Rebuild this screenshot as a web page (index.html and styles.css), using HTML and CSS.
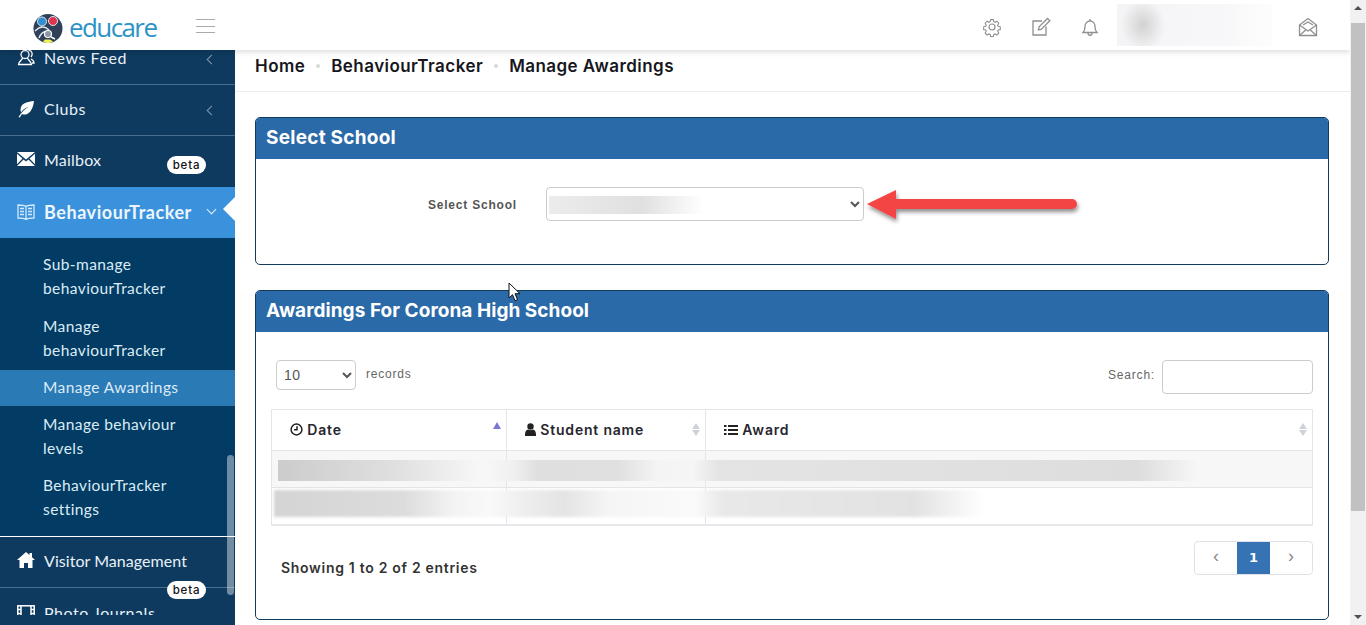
FILE: index.html
```html
<!DOCTYPE html>
<html lang="en">
<head>
<meta charset="utf-8">
<title>Manage Awardings</title>
<link rel="stylesheet" href="styles.css">
</head>
<body>
<div class="app">
  <div class="page">
    <header class="topbar">
      <div class="brand">
        <svg class="logo" width="30" height="30" viewBox="0 0 30 30">
          <circle cx="15" cy="14.500" r="14.500" fill="#2f4058"/>
          <circle cx="9" cy="7.500" r="4.500" fill="#2f8fd0" stroke="#dfe6ee" stroke-width="1"/>
          <circle cx="20" cy="7" r="4.500" fill="#e0344c" stroke="#dfe6ee" stroke-width="1"/>
          <path d="M2 17c5-5 10-5 14-1M6 24c2-5 6-8 12-6" fill="none" stroke="#dfe6ee" stroke-width="1.500"/>
          <circle cx="15" cy="20" r="3.500" fill="#8a96a3" stroke="#fff" stroke-width="1.200"/>
          <path d="M18 23l4 2" stroke="#fff" stroke-width="1.500"/>
          <path d="M10 27.500c3 2 7 2 10 0l-3-2h-5z" fill="#eef05a"/>
        </svg>
        <span class="brand-name">educare</span>
      </div>
      <div class="burger"><i></i><i></i><i></i></div>
      <div class="top-icons">
        <svg class="top-icon" width="20" height="20" viewBox="0 0 20 20" fill="none" stroke="#8f8f8f" stroke-width="1.200"><circle cx="10" cy="10" r="3"/><path d="M8.500 1.800h3l.5 2.300 1.500.7 2-1.200 2 2.200-1.200 2 .6 1.400 2.300.6v3l-2.300.5-.6 1.500 1.200 2-2.100 2.100-2-1.200-1.400.6-.5 2.200h-3l-.5-2.200-1.500-.6-2 1.200-2.100-2.100 1.200-2-.6-1.500-2.300-.5v-3l2.300-.6.6-1.400-1.200-2 2.100-2.200 2 1.200 1.400-.7z" transform="translate(1 1) scale(.9)"/></svg>
        <svg class="top-icon" width="20" height="20" viewBox="0 0 20 20" fill="none" stroke="#8f8f8f" stroke-width="1.300"><path d="M15 9.500V18H2V4h9"/><path d="M7.500 12.800l.6-3L16.500 1.500l2.300 2.300-8.300 8.400z"/></svg>
        <svg class="top-icon" width="20" height="20" viewBox="0 0 20 20" fill="none" stroke="#8f8f8f" stroke-width="1.300"><path d="M3 15.500c1.500-1.500 2-3 2-6 0-3 2-5.500 5-5.500s5 2.500 5 5.500c0 3 .5 4.500 2 6z"/><path d="M10 2v2M8 16c0 3 4 3 4 0"/></svg>
      </div>
      <div class="user-blur"></div>
      <svg class="mail-icon" width="20" height="20" viewBox="0 0 20 20" fill="none" stroke="#8f8f8f" stroke-width="1.300"><path d="M1.500 8L10 1.500 18.500 8v10.500h-17z"/><path d="M1.500 8l8.500 6 8.500-6M1.500 18.500L8 12.800M18.500 18.500L12 12.800"/><path d="M5 8l5-3 5 3"/></svg>
    </header>
    <div class="body">
      <nav class="sidebar">
        <div class="menu-clip">
        <ul class="menu">
          <li class="menu-item">
            <svg class="mi" width="18" height="18" viewBox="0 0 18 18" fill="none" stroke="#fff" stroke-width="1.300"><circle cx="8" cy="5.500" r="4"/><path d="M5.500 9c0 2-4 3.500-4 6.500h13c0-3-4-4.500-4-6.500"/><path d="M11.500 1.500c3-.5 5 3.500 2.500 6.500M14 10c2 1 3 2.500 3 4h-2"/></svg>
            <span>News Feed</span><b class="chev"></b>
          </li>
          <li class="menu-item">
            <svg class="mi" width="18" height="18" viewBox="0 0 18 18" fill="#fff"><path d="M17 1C11 2 4 2.500 3.500 9.500c0 1 .2 2 .7 2.800C6 9.500 9 7.500 12 6.500 8.500 8.500 5 11.500 1.500 17l1.200.5c.8-1.300 1.500-2.500 2.300-3.500C9.500 16 15.500 13 17 1z"/></svg>
            <span>Clubs</span><b class="chev"></b>
          </li>
          <li class="menu-item menu-mail">
            <svg class="mi" width="18" height="14" viewBox="0 0 18 14" fill="#fff"><path d="M0 0h18L9 7.500zM0 1.800V12.300L5.500 6.400zM18 1.800V12.300L12.500 6.400zM0 14l6.500-6.500L9 9.500l2.500-2L18 14z"/></svg>
            <span>Mailbox</span><em class="beta">beta</em>
          </li>
          <li class="menu-item active">
            <svg class="mi" width="18" height="16" viewBox="0 0 18 16" fill="none" stroke="#d5e9fa" stroke-width="1.300"><path d="M9 2.500C7 1 4 1 1 1v13c3 0 6 0 8 1.500 2-1.500 5-1.500 8-1.500V1c-3 0-6 0-8 1.500zM9 2.500v13M3 4.500h4M3 7.500h4M3 10.500h4M11 4.500h4M11 7.500h4M11 10.500h4"/></svg>
            <span>BehaviourTracker</span><b class="chev down"></b>
          </li>
          <li class="submenu">
            <a class="sub">Sub-manage behaviourTracker</a>
            <a class="sub">Manage behaviourTracker</a>
            <a class="sub current">Manage Awardings</a>
            <a class="sub">Manage behaviour levels</a>
            <a class="sub">BehaviourTracker settings</a>
          </li>
          <li class="menu-item visitor">
            <svg class="mi" width="18" height="16" viewBox="0 0 18 16" fill="#fff"><path d="M9 0L0 8h2.500v8H7v-5h4v5h4.500V8H18l-3-2.700V1h-2.500v2z"/></svg>
            <span>Visitor Management</span>
          </li>
          <li class="menu-item photo">
            <svg class="mi" width="18" height="14" viewBox="0 0 18 14" fill="none" stroke="#fff" stroke-width="1.500"><rect x=".8" y=".8" width="16.400" height="12.400"/><path d="M4 1v12M14 1v12M1 4.500h3M1 8.500h3M14 4.500h3M14 8.500h3"/></svg>
            <span>Photo Journals</span><em class="beta">beta</em>
          </li>
        </ul>
        </div>
        <div class="side-thumb"></div>
      </nav>
      <main class="content">
        <div class="crumbs">
          <span>Home</span><i class="dot"></i><span>BehaviourTracker</span><i class="dot"></i><span>Manage Awardings</span>
        </div>
        <section class="panel panel-school">
          <h2 class="panel-title">Select School</h2>
          <div class="school-form">
            <label class="form-label">Select School</label>
            <div class="school-select">
              <select class="select wide"><option></option></select>
              <div class="select-blur"></div>
            </div>
          </div>
        </section>
        <section class="panel panel-awards">
          <h2 class="panel-title">Awardings For Corona High School</h2>
          <div class="panel-body">
            <div class="controls">
              <div class="length">
                <select class="select short"><option>10</option></select>
                <span class="hint">records</span>
              </div>
              <div class="search">
                <span class="hint">Search:</span>
                <input class="search-input" type="text">
              </div>
            </div>
            <div class="table-wrap">
              <table class="table">
                <thead>
                  <tr>
                    <th class="c1">
                      <svg width="13" height="13" viewBox="0 0 13 13" fill="none" stroke="#222" stroke-width="1.500"><circle cx="6.500" cy="6.500" r="5.400"/><path d="M7 3.200v3.600H4"/></svg>
                      Date<span class="sort asc"></span>
                    </th>
                    <th class="c2">
                      <svg width="11" height="13" viewBox="0 0 11 13" fill="#222"><circle cx="5.500" cy="3.500" r="3.200"/><path d="M0 13c-.3-4 1-6 3-6.500 1.500 1 3.500 1 5 0 2 .5 3.300 2.500 3 6.500z"/></svg>
                      Student name<span class="sort"></span>
                    </th>
                    <th class="c3">
                      <svg width="14" height="12" viewBox="0 0 14 12" fill="#222"><path d="M0 1h2.500v2H0zM4 1h10v2H4zM0 5h2.500v2H0zM4 5h10v2H4zM0 9h2.500v2H0zM4 9h10v2H4z"/></svg>
                      Award<span class="sort"></span>
                    </th>
                  </tr>
                </thead>
                <tbody>
                  <tr class="odd"><td></td><td></td><td></td></tr>
                  <tr><td></td><td></td><td></td></tr>
                </tbody>
              </table>
              <div class="row-blur blur-a"></div>
              <div class="row-blur blur-b"></div>
            </div>
            <div class="foot">
              <div class="info">Showing 1 to 2 of 2 entries</div>
              <div class="pager">
                <span class="pg wide-pg">‹</span><span class="pg on">1</span><span class="pg wide-pg">›</span>
              </div>
            </div>
          </div>
        </section>
      </main>
    </div>
  </div>
  <div class="scrollbar">
    <span class="sb-arrow up"></span>
    <div class="sb-thumb"></div>
    <span class="sb-arrow dn"></span>
  </div>
</div>
<svg class="arrow" width="220" height="44" viewBox="0 0 220 44">
  <defs><filter id="sh" x="-10%" y="-40%" width="120%" height="180%"><feDropShadow dx="1" dy="3" stdDeviation="2" flood-color="#000" flood-opacity=".45"/></filter></defs>
  <path d="M2 17L31 3v9h176a5 5 0 0 1 0 10H31v10z" fill="#f44444" filter="url(#sh)"/>
</svg>
<svg class="cursor" width="14" height="20" viewBox="0 0 14 20"><path d="M1 1v15l3.500-3.300 2.500 6 2.500-1-2.500-6h5z" fill="#fff" stroke="#111" stroke-width="1"/></svg>
</body>
</html>
```
FILE: styles.css
```css
* { box-sizing: border-box; }
html, body { margin: 0; height: 625px; overflow: hidden; background: #fff; }
body { font-family: "Inter", "Liberation Sans", sans-serif; position: relative; }
.app { display: flex; height: 625px; width: 1366px; }
.page { width: 1350px; display: flex; flex-direction: column; height: 625px; }

/* top bar */
.topbar { height: 50px; flex: none; display: flex; align-items: center; background: #fff; box-shadow: 0 2px 6px rgba(0,0,0,.14); position: relative; z-index: 3; }
.brand { width: 196px; display: flex; align-items: center; padding-left: 33px; gap: 6px; }
.logo { flex: none; margin-top: 8px; }
.brand-name { font-family: "Open Sans", sans-serif; font-size: 26px; font-weight: 500; letter-spacing: -1.600px; color: #2c93c6; line-height: 30px; margin-top: 3px; }
.burger { width: 19px; display: flex; flex-direction: column; gap: 5.500px; margin-top: 2px; }
.burger i { display: block; height: 1px; background: #aaa; }
.top-icons { display: flex; gap: 29px; margin-left: 767px; margin-top: 4px; }
.top-icon { display: block; }
.user-blur { width: 155px; height: 42px; margin-left: 17px; background: radial-gradient(ellipse 22px 26px at 26px 21px, #d2d2d2, rgba(245,245,247,.2) 100%), linear-gradient(90deg, #f4f4f6, #f8f8fa 70%, #fff); }
.mail-icon { margin-left: 26px; margin-top: 3px; }

.body { flex: 1; display: flex; min-height: 0; }

/* sidebar */
.sidebar { width: 235px; flex: none; background: #0e3a5f; position: relative; overflow: hidden; }
.menu-clip { height: 565px; overflow: hidden; }
.menu { list-style: none; margin: -16px 0 0; padding: 0; font-family: "Lato", sans-serif; color: #e8f1f8; }
.menu-item { height: 51px; display: flex; align-items: center; padding: 0 17px 0 17px; border-bottom: 1px solid #4a6f8e; font-size: 16px; letter-spacing: .55px; position: relative; padding-bottom: 3px; }
.mi { flex: none; margin-right: 9px; }
.menu-mail { height: 51px; border-bottom: 0; padding-bottom: 5px; letter-spacing: .2px; }
.chev { position: absolute; right: 20px; top: 22px; width: 7px; height: 7px; border-left: 1.500px solid #8299ad; border-bottom: 1.500px solid #8299ad; transform: rotate(45deg); }
.chev.down { right: 20px; top: 19px; border-color: #e6f2fb; transform: rotate(-45deg); }
.active { background: #3a92dc; border: 0; font-weight: 700; font-size: 18px; letter-spacing: .55px; color: #eef6fd; padding-bottom: 1px; }
.active::after { content: ""; position: absolute; right: 0; top: 10px; border: 12px solid transparent; border-right-color: #fff; border-left-width: 0; }
.beta { position: absolute; left: 167px; top: 20px; width: 39px; height: 18px; border-radius: 9px; background: #fff; color: #111; font: 500 11.500px/18px "Inter", sans-serif; letter-spacing: .8px; text-align: center; }
.submenu { background: #023c64; padding: 14px 0 20px; border-bottom: 1px solid #fff; height: 299px; font-size: 15.500px; letter-spacing: .42px; color: #dcebf5; }
.sub { display: block; padding: 6.500px 30px 6.500px 43px; line-height: 24px; }
.sub:first-child { padding-top: 0; padding-bottom: 7.500px; }
.current { background: #2a7ab6; height: 36px; padding-top: 5.500px; padding-bottom: 0; margin: 1px 0 0; }
.visitor { height: 51px; padding-bottom: 4px; letter-spacing: .05px; }
.photo { border: 0; }
.photo .beta { top: -7px; }
.side-thumb { position: absolute; left: 227px; top: 405px; width: 7px; height: 140px; border-radius: 4px; background: rgba(255,255,255,.42); }

/* content */
.content { flex: 1; min-width: 0; padding: 0 21px 0 20px; overflow: hidden; }
.crumbs { height: 42px; margin: 0 -21px 0 -20px; padding: 0 20px 10px; border-bottom: 1px solid #ececec; display: flex; align-items: center; font-weight: 600; font-size: 17px; letter-spacing: .45px; color: #16161c; gap: 11px; }
.dot { width: 4px; height: 4px; margin: 1px 0 0; border-radius: 50%; background: #d8d8d8; }
.panel { border: 1px solid #123a5a; border-radius: 5px; overflow: hidden; background: #fff; }
.panel-school { margin-top: 25px; height: 148px; }
.panel-awards { margin-top: 25px; height: 330px; }
.panel-title { margin: 0; height: 41px; background: #2b6aa8; color: #fff; padding: 0 10px; font-size: 19px; font-weight: 700; line-height: 40px; letter-spacing: .25px; }
.panel-awards .panel-title { letter-spacing: .05px; }
.school-form { display: flex; align-items: center; padding-top: 28px; }
.form-label { width: 261px; text-align: right; font: 700 12px "Liberation Sans", sans-serif; letter-spacing: .8px; color: #555; margin-right: 29px; padding-top: 2px; }
.school-select { position: relative; }
.select { font-family: "Liberation Sans", sans-serif; border: 1px solid #ccc; border-radius: 4px; background-color: #fff; color: #555; display: block; }
.wide { width: 318px; height: 34px; }
.short { width: 80px; height: 30px; font-size: 14px; padding-left: 3px; letter-spacing: .5px; }
.select-blur { position: absolute; left: 3px; top: 9px; width: 155px; height: 18px; background: linear-gradient(90deg, #ececec, #e0e0e0 60%, #fff); }

.panel-body { padding: 28px 15px 0; }
.controls { display: flex; justify-content: space-between; height: 49px; }
.length { display: flex; align-items: flex-start; padding-left: 5px; gap: 10px; }
.hint { font: 12px "Liberation Sans", sans-serif; letter-spacing: .8px; color: #666; line-height: 28px; }
.search { display: flex; align-items: flex-start; gap: 7px; }
.search .hint { line-height: 31px; }
.search-input { width: 151px; height: 34px; border: 1px solid #ccc; border-radius: 4px; background: #fff; display: block; }

.table-wrap { position: relative; }
.table { width: 1042px; border-collapse: collapse; table-layout: fixed; border: 1px solid #e6e8eb; border-bottom-width: 2px; }
.table th, .table td { border: 1px solid #e3e5e8; padding: 0; }
.table th { height: 41px; text-align: left; font-size: 14px; font-weight: 600; letter-spacing: .8px; color: #26262e; padding: 0 0 2px 18px; position: relative; white-space: nowrap; }
.table th svg { vertical-align: -1.500px; }
.table td { height: 37px; }
.c1 { width: 235px; }
.c2 { width: 199px; }
.odd td { background: #f7f7f7; }
.sort { position: absolute; right: 5px; top: 13px; border: 4px solid transparent; border-top: 0; border-bottom: 6px solid #cfd2d6; }
.sort::after { content: ""; position: absolute; left: -4px; top: 7px; border: 4px solid transparent; border-bottom: 0; border-top: 6px solid #cfd2d6; }
.sort.asc { right: 5px; top: 12px; border-width: 0 4.500px 7px; border-bottom-color: #7a78d0; }
.sort.asc::after { display: none; }
.row-blur { position: absolute; height: 21px; }
.blur-a { left: 7px; top: 51px; width: 920px; background: linear-gradient(90deg, #cccccc 0, #e0e0e0 120px, #eeeeee 170px, #f8f8f8 205px, #f0f0f0 235px, #dfdfdf 260px, #e0e0e0 340px, #f4f4f4 380px, #f5f5f5 415px, #e4e4e4 440px, #e0e0e0 700px, #dddddd 860px, rgba(247,247,247,0) 920px); }
.blur-b { left: 3px; top: 81px; width: 710px; height: 27px; filter: blur(1.500px); background: linear-gradient(90deg, #d4d4d4 0, #dcdcdc 130px, #f3f3f3 180px, #f9f9fa 215px, #eeeeee 250px, #e4e4e4 290px, #f5f5f5 335px, #fafafa 420px, #e8e8e8 450px, #e2e2e2 640px, rgba(255,255,255,0) 710px); }

.foot { display: flex; justify-content: space-between; margin-top: 15px; }
.info { padding: 17px 0 0 10px; font-size: 14px; font-weight: 600; letter-spacing: .7px; color: #333; line-height: 20px; }
.pager { display: flex; width: 119px; height: 34px; border: 1px solid #dee2e6; border-radius: 4px; overflow: hidden; }
.pg { display: flex; align-items: center; justify-content: center; font-family: "Liberation Sans", sans-serif; color: #888; font-size: 18px; padding-bottom: 3px; }
.wide-pg { width: 42px; }
.on { width: 33px; background: #3673b5; color: #fff; font: 700 13px "DejaVu Sans", sans-serif; padding-bottom: 0; }

/* scrollbar */
.scrollbar { width: 16px; height: 625px; flex: none; background: #f1f1f1; display: flex; flex-direction: column; align-items: center; position: relative; z-index: 4; }
.sb-arrow { flex: none; width: 0; height: 0; border: 4px solid transparent; }
.up { border-top: 0; border-bottom: 4px solid #505050; margin: 6px 0 13px; }
.dn { border-bottom: 0; border-top: 4px solid #505050; margin-top: auto; margin-bottom: 6px; }
.sb-thumb { width: 14px; height: 488px; background: #c1c1c1; flex: none; }

/* annotations on top of the screenshot */
.arrow { position: absolute; left: 865px; top: 187px; z-index: 5; }
.cursor { position: absolute; left: 508px; top: 282px; z-index: 5; }
```
